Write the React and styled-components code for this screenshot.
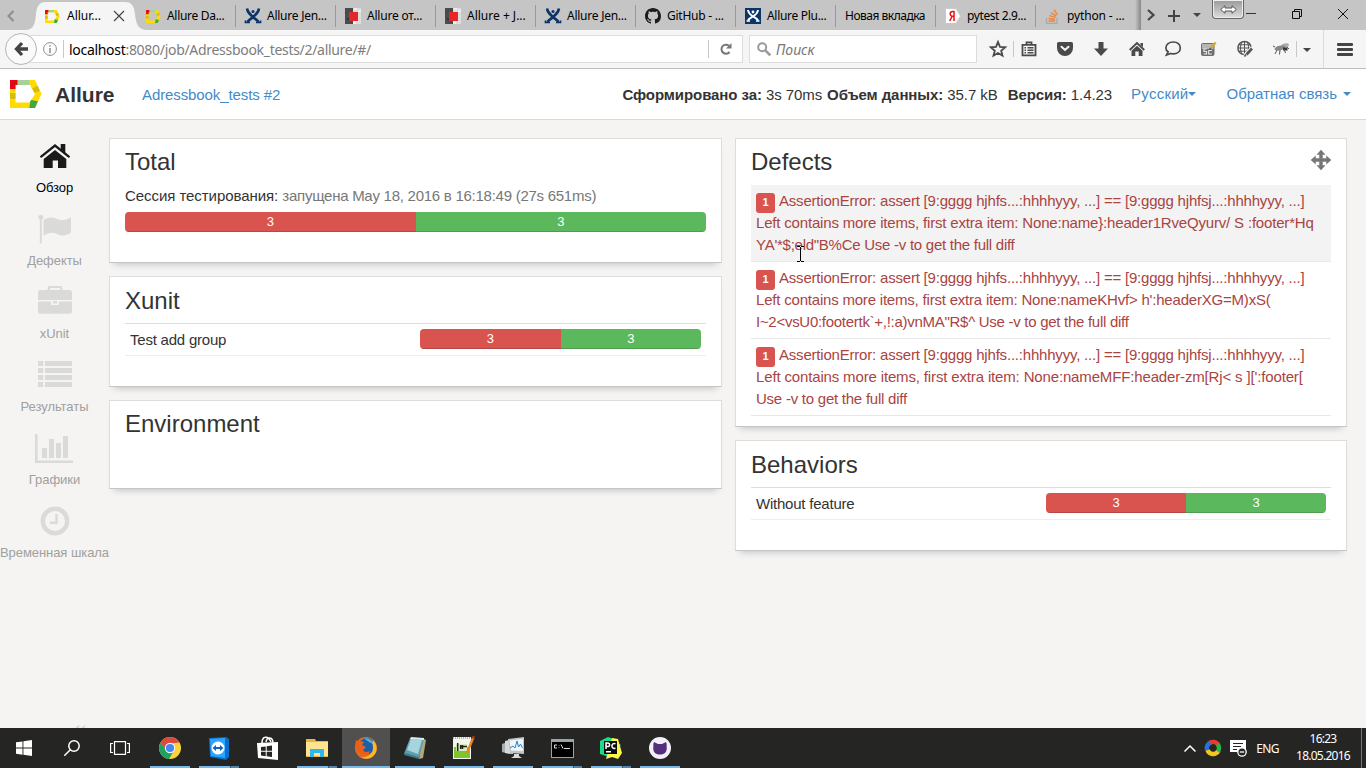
import React from "react";
import styled, { createGlobalStyle, css } from "styled-components";

const GlobalStyle = createGlobalStyle`
  * { box-sizing: border-box; }
  body {
    margin: 0;
    overflow: hidden;
    background: #f5f4f2;
    font-family: "Liberation Sans", Arial, sans-serif;
    font-size: 15px;
    color: #333;
  }
  svg { display: block; flex: none; overflow: visible; }
`;

const uiFont = css`font-family: "Noto Sans", "Open Sans", sans-serif;`;

const Screen = styled.div`
  width: 1366px;
  height: 768px;
  display: flex;
  flex-direction: column;
  overflow: hidden;
`;

/* ---------- browser chrome ---------- */

const TabStrip = styled.div`
  height: 30px;
  display: flex;
  background: #c5c5c5;
  ${uiFont}
`;

const StripCell = styled.div`
  width: ${(p) => p.$w}px;
  height: ${(p) => p.$h || 30}px;
  display: flex;
  align-items: center;
  justify-content: center;
  flex: none;
`;

const TabBox = styled.div`
  position: relative;
  width: 100px;
  height: 30px;
  padding: 2px 0 0 ${(p) => (p.$first ? 11 : 10)}px;
  display: flex;
  align-items: center;
  flex: none;
  color: #000;
  > svg { position: relative; z-index: 1; }
  &::after {
    content: "";
    display: ${(p) => (p.$active || p.$first ? "none" : "block")};
    position: absolute;
    left: 0;
    top: 5px;
    height: 22px;
    width: 1px;
    background: #999;
  }
`;

const TabShape = styled.div`
  position: absolute;
  left: -9px;
  top: 0;
`;

const TabTitle = styled.span`
  position: relative;
  z-index: 1;
  font-size: 12px;
  line-height: 18px;
  letter-spacing: ${(p) => p.$ls ?? -0.25}px;
  margin-left: ${(p) => (p.$noIcon ? 0 : p.$active ? 7 : 6)}px;
  white-space: nowrap;
  width: ${(p) => (p.$active ? "46px" : "auto")};
`;

const NavBar = styled.div`
  height: 39px;
  display: flex;
  align-items: center;
  background: #f5f5f5;
  border-bottom: 1px solid #bdbdbd;
  padding-left: 5px;
  ${uiFont}
`;

const BackButton = styled.div`
  position: relative;
  z-index: 1;
  width: 32px;
  height: 32px;
  border-radius: 50%;
  border: 1px solid #b5b5b5;
  background: #fafafa;
  display: flex;
  align-items: center;
  justify-content: center;
  flex: none;
`;

const Field = styled.div`
  height: 28px;
  width: ${(p) => p.$w}px;
  margin-left: ${(p) => p.$ml}px;
  padding-left: ${(p) => p.$pl}px;
  background: #fff;
  border: 1px solid #dcdcdc;
  display: flex;
  align-items: center;
  flex: none;
`;

const Rule = styled.div`
  width: 1px;
  height: ${(p) => p.$h || 18}px;
  margin-left: ${(p) => p.$ml || 0}px;
  background: ${(p) => p.$c || "#c8c8c8"};
  flex: none;
`;

const Url = styled.span`
  flex: 1;
  margin-left: 5px;
  padding-top: 1px;
  font-size: 14px;
  letter-spacing: -0.47px;
  color: #7d7d7d;
  letter-spacing: -0.3px;
  b { font-weight: 400; color: #000; }
`;

const Placeholder = styled.span`
  margin-left: 5px;
  padding-top: 1px;
  font-size: 14px;
  font-style: italic;
  color: #777;
`;

/* ---------- report ---------- */

const ReportHeader = styled.header`
  height: 51px;
  display: flex;
  align-items: center;
  background: #fff;
  border-bottom: 1px solid #d9d9d9;
  padding-left: 10px;
  white-space: nowrap;
`;

const Brand = styled.span`
  width: 87px;
  margin: 2px 0 0 13px;
  font-size: 21px;
  font-weight: 700;
  line-height: 24px;
`;

const Link = styled.a`
  color: #428bca;
  display: flex;
  align-items: center;
  margin-left: ${(p) => p.$ml || 0}px;
  margin-top: ${(p) => p.$mt || 0}px;
  letter-spacing: ${(p) => p.$ls || 0}px;
`;

const Caret = styled.i`
  margin-left: ${(p) => p.$ml || 0}px;
  margin-top: 2px;
  border: 4px solid transparent;
  border-top-color: ${(p) => p.$c || "#428bca"};
  border-bottom: 0;
`;

const Stats = styled.div`
  flex: 1;
  display: flex;
  justify-content: flex-end;
`;

const Stat = styled.span`
  margin-left: ${(p) => p.$ml || 0}px;
  letter-spacing: -0.08px;
`;

const Body = styled.main`
  height: 608px;
  display: flex;
  padding-right: 19px;
`;

const Side = styled.nav`
  width: 109px;
  padding-top: 21px;
  display: flex;
  flex-direction: column;
  align-items: center;
  flex: none;
`;

const SideItem = styled.div`
  height: 73px;
  flex: none;
  display: flex;
  flex-direction: column;
  align-items: center;
  font-size: 13px;
  line-height: 18px;
  letter-spacing: -0.06px;
  color: ${(p) => (p.$active ? "#000" : "#a0a0a0")};
  white-space: nowrap;
  svg { margin-bottom: 6px; color: ${(p) => (p.$active ? "#1a1a1a" : "#dadad8")}; }
`;

const Collapse = styled.div`
  flex: none;
  margin: 135px 0 0 50px;
  font-size: 26px;
  line-height: 30px;
  color: #d8d8d6;
`;

const Column = styled.div`
  width: ${(p) => p.$w}px;
  margin: 18px ${(p) => p.$mr || 0}px 0 0;
  display: flex;
  flex-direction: column;
  gap: 13px;
  flex: none;
`;

const Card = styled.section`
  height: ${(p) => p.$h}px;
  padding: 7px 15px 0;
  background: #fff;
  border: 1px solid #dddddb;
  border-bottom-color: #c4c5c7;
  box-shadow: 0 6px 7px -5px rgba(0, 0, 0, 0.22);
`;

const CardHead = styled.div`
  height: 39px;
  padding-top: ${(p) => (p.$low ? 1 : 0)}px;
  display: flex;
  justify-content: space-between;
`;

const Title = styled.h3`
  margin: 0;
  font-size: 24px;
  font-weight: 400;
  line-height: 32px;
`;

const Session = styled.p`
  margin: 0 0 5px;
  line-height: 22px;
  letter-spacing: -0.06px;
  white-space: nowrap;
  span { color: #777; letter-spacing: -0.26px; }
`;

const Bar = styled.div`
  width: ${(p) => p.$w};
  height: 20px;
  display: flex;
  border-radius: 4px;
  overflow: hidden;
`;

const Segment = styled.div`
  flex: 1;
  background: ${(p) => (p.$ok ? "#5cb85c" : "#d9534f")};
  box-shadow: inset 0 -1px 0 rgba(0, 0, 0, 0.15);
  color: #fff;
  font-size: 13px;
  line-height: 20px;
  text-align: center;
`;

const TableRow = styled.div`
  height: 33px;
  display: flex;
  align-items: center;
  justify-content: space-between;
  padding: 0 5px 1px;
  border-top: 1px solid #ddd;
  border-bottom: 1px solid #eee;
  span { letter-spacing: -0.22px; }
`;

const Defect = styled.div`
  height: 77px;
  padding: 5px;
  line-height: 22px;
  color: #a94442;
  white-space: pre;
  border-bottom: 1px solid #e8e8e8;
  background: ${(p) => (p.$hover ? "#f3f3f3" : "#fff")};
`;

const DefectLine = styled.div`
  height: 22px;
  display: flex;
  letter-spacing: ${(p) => p.$ls}px;
`;

const Badge = styled.span`
  width: 19px;
  height: 20px;
  margin: 3px 4px 0 0;
  border-radius: 3px;
  background: #d9534f;
  color: #fff;
  font-size: 11px;
  font-weight: 700;
  line-height: 18px;
  text-align: center;
`;

const Pointer = styled.div`
  position: absolute;
  left: 797px;
  top: 246px;
`;

/* ---------- taskbar ---------- */

const Taskbar = styled.footer`
  position: relative;
  height: 40px;
  display: flex;
  background: #252523;
  color: #fff;
  ${uiFont}
`;

const TaskButton = styled.div`
  position: relative;
  width: 48px;
  height: 40px;
  margin-right: ${(p) => (p.$app ? 1 : 0)}px;
  display: flex;
  align-items: center;
  justify-content: center;
  flex: none;
  background: ${(p) => (p.$active ? "#505050" : "transparent")};
  &::after {
    content: "";
    display: ${(p) => (p.$open ? "block" : "none")};
    position: absolute;
    bottom: 0;
    left: ${(p) => (p.$active ? 0 : 4)}px;
    right: ${(p) => (p.$active ? 0 : 4)}px;
    height: 2px;
    background: ${(p) => (p.$multi ? "linear-gradient(90deg,#76b9ed 31px,#3b5a70 31px,#3b5a70 32px,#5384ab 32px)" : "#76b9ed")};
  }
`;

const Tray = styled.div`
  flex: 1;
  display: flex;
  align-items: center;
  justify-content: flex-end;
  font-size: 12px;
`;

const Lang = styled.span`
  margin: 0 17px 0 10px;
  letter-spacing: -0.6px;
`;

const Clock = styled.div`
  width: 54px;
  margin-top: -2px;
  text-align: center;
  line-height: 17px;
  letter-spacing: -0.75px;
  white-space: nowrap;
`;

/* ---------- drawings ---------- */

const Svg = ({ w = 16, h = w, box, children, ...rest }) => (
  <svg width={w} height={h} viewBox={box || `0 0 ${w} ${h}`} fill="currentColor" {...rest}>{children}</svg>
);

const AllureLogo = ({ w = 32, h = 28 }) => (
  <Svg w={w} h={h} box="0 0 32 28">
    <path fill="#ffdb00" fillRule="evenodd" d="M0 0H25L31.500 14 25 28H0zM5.500 5V22.500H19.500L25 14 20 5z" />
    <path fill="#e30613" d="M0 0h7.700v5H5.500v4H0z" />
    <path fill="#a6d09c" d="M7.700 0h11.600v5H7.700z" />
    <path fill="#d9ba10" d="M22.200 8.500l5.400-2.800 2.300 5.300-5.500 2zM0 13h5.500v6H0z" />
    <path fill="#3fa845" d="M21.200 20l6.700 1.300L25 28h-5.700l1-5.500h-.8z" />
  </Svg>
);

const JiraMark = ({ c = "#0b3468" }) => (
  <Svg w={16} stroke={c} fill="none">
    <path strokeWidth="2.500" d="M2 .5C2.500 5 6 7 8 9s4 2.500 5.500 5M14 .5C13.500 5 10 7 8 9s-4 2.500-5.500 5" />
    <circle cx="8" cy="3.600" r="1.500" fill={c} stroke="none" />
    <path strokeWidth="1.700" d="M.5 12.500v2H5M15.500 12.500v2H11" />
  </Svg>
);

const RedBox = () => (
  <Svg w={16}>
    <path fill="#4b4b4d" d="M0 0h8v16H0z" />
    <path fill="#ddd" d="M8 0h8v16H8z" />
    <path fill="#eee" d="M9 0h3v2H9zM13 2h3v2h-3zM8 13h3v3H8z" />
    <path fill="#e3272b" d="M4 4h9v9H4z" />
    <path fill="#333" d="M0 4h1v1H0zM2 10h2v2H2z" />
  </Svg>
);

const OCTO = "M8 0C3.580 0 0 3.580 0 8c0 3.540 2.290 6.530 5.470 7.590.4.070.55-.17.55-.38 0-.19-.01-.82-.01-1.490-2.010.37-2.530-.49-2.690-.94-.09-.23-.48-.94-.82-1.130-.28-.15-.68-.52-.01-.53.63-.01 1.080.58 1.230.82.72 1.210 1.870.87 2.330.66.07-.52.28-.87.51-1.070-1.780-.2-3.640-.89-3.640-3.950 0-.87.31-1.590.82-2.150-.08-.2-.36-1.020.08-2.120 0 0 .67-.21 2.200.82.64-.18 1.320-.27 2-.27s1.360.09 2 .27c1.530-1.040 2.200-.82 2.200-.82.44 1.100.16 1.920.08 2.120.51.56.82 1.270.82 2.150 0 3.070-1.870 3.750-3.650 3.950.29.25.54.73.54 1.480 0 1.070-.01 1.930-.01 2.200 0 .21.15.46.55.38A8.010 8.010 0 0 0 16 8c0-4.420-3.580-8-8-8z";

const Octocat = () => <Svg w={16}><path fill="#1b1b1b" d={OCTO} /></Svg>;

const JiraTile = () => (
  <Svg w={16}>
    <path fill="#0b3468" d="M0 0h16v16H0z" />
    <g stroke="#fff" fill="none" strokeWidth="2">
      <path d="M3 2c.5 4 3 5 5 6.500s4 2 5 4M13 2c-.5 4-3 5-5 6.500s-4 2-5 4" />
    </g>
    <circle cx="8" cy="4" r="1.400" fill="#fff" />
    <path stroke="#fff" strokeWidth="1.400" d="M1.500 13H5M11 13h3.500" />
  </Svg>
);

const YandexMark = () => (
  <Svg w={16}>
    <path fill="#fff" stroke="#c9c9c9" d="M1.500.5H11l4.500 7.500-4.500 7.500H1.500Q.5 15.500.5 14.500v-13Q.5.500 1.500.500z" />
    <path fill="none" stroke="#e11" strokeWidth="1.500" d="M9 13V3.400H7.600c-3.200 0-3.200 4.900 0 4.900H9M7 8.500L4.700 13" />
  </Svg>
);

const StackMark = () => (
  <Svg w={16} fill="none">
    <path stroke="#aaa" strokeWidth="1.300" d="M1.500 10v5.300h10.500V10" />
    <path stroke="#ef8236" strokeWidth="1.400" d="M3.500 13h6.500M3.600 10.500l6.500.7M4.300 7.600l6.200 1.800M6 4.600l5.400 3.500M9 1.600l3.500 5.300" />
  </Svg>
);

const ActiveTabShape = () => (
  <Svg w={120} h={30}>
    <path fill="#f5f5f5" d="M0 30C8 29 9 24 10 14 11 5 14 2 20 2h79c6 0 9 3 10 12 1 10 3 15 11 16z" />
  </Svg>
);

const SideIcons = {
  home: (
    <>
      <path d="M19 9l11.300 9V27H22v-7.500h-5.300V27H7.700V18z" />
      <path fill="none" stroke="currentColor" strokeWidth="2.300" strokeLinecap="round" d="M5.200 15.600L19 4.500l13.800 11.100" />
      <path d="M24.700 3h4.600v10L24.700 9z" />
    </>
  ),
  flag: (
    <>
      <circle cx="5.800" cy="3.200" r="2.500" />
      <path d="M4.800 4h2v25.500h-2zM8.500 6C12 3.500 16 2.800 19.500 4 25 6.500 29 7.500 36 3.200V18.500C30 22.500 26 22 22 20 17 17.800 13 19 8.500 21.800z" />
    </>
  ),
  briefcase: (
    <>
      <path d="M2 5.500Q2 3 4.500 3H11.700V1Q11.700-1 13.500-1h11Q26.300-1 26.300 1v2h7.200Q36 3 36 5.500V13H2zM14 3h10V1H14z" fillRule="evenodd" />
      <path d="M2 14.500h13V18h8v-3.500h13v9.700q0 2.500-2.500 2.500h-29Q2 26.700 2 24.200z" />
      <path d="M17 14h4v2.500h-4z" />
    </>
  ),
  list: <path d="M2 1h5.300v5H2zM9 1h27v5H9zM2 8h5.300v5H2zM9 8h27v5H9zM2 15h5.300v5H2zM9 15h27v5H9zM2 22h5.300v5H2zM9 22h27v5H9z" />,
  chart: <path d="M0 1h2.600v26.500H38V30H0zM7 15h5v10H7zM14 6h5v19h-5zM21 10h5v15h-5zM28 3h5v22h-5z" />,
  clock: (
    <g fill="none" stroke="currentColor">
      <circle cx="19" cy="15" r="12.200" strokeWidth="4.400" />
      <path strokeWidth="2.500" d="M20.500 8v8.700H14" />
    </g>
  ),
};

const MoveIcon = () => (
  <Svg w={20} fill="#777" stroke="#777" strokeWidth=".5">
    <path d="M10 0l4 4.500h-2.500v4h4V6L20 10l-4.500 4v-2.500h-4v4H14L10 20l-4-4.500h2.500v-4h-4V14L0 10l4.500-4v2.500h4v-4H6z" />
  </Svg>
);

const toolIcons = [
  <Svg w={16} h={16} key="list" fill="none" stroke="#4a4a4a"><path strokeWidth="1.800" d="M1.500 3.900h13v10.500h-13zM5.500 3.500V1.300h5v2.200" /><path strokeWidth="1.500" d="M3.500 6.700H5M6.500 6.700h6M3.500 9.200H5M6.500 9.200h6M3.500 11.700H5M6.500 11.700h6" /></Svg>,
  <Svg w={16} key="pocket"><path fill="#4a4a4a" d="M1.500 1h13Q16 1 16 2.500V7a8 8 0 0 1-16 0V2.500Q0 1 1.500 1z" /><path fill="none" stroke="#f5f5f5" strokeWidth="2" strokeLinecap="round" d="M4.500 5.700L8 9l3.500-3.300" /></Svg>,
  <Svg w={16} key="down"><path fill="#4a4a4a" d="M5.500 1h5v6.500H15L8 15 1 7.500h4.500z" /></Svg>,
  <Svg w={16} key="home"><path fill="#4a4a4a" d="M8 4.800l5.500 5V15H9.700v-4.500H6.300V15H2.500V9.800z" /><path fill="none" stroke="#4a4a4a" strokeWidth="1.800" d="M.7 9L8 2l7.300 7" /><path fill="#4a4a4a" d="M11.500 2H14v4l-2.500-2z" /></Svg>,
  <Svg w={16} key="chat" fill="none" stroke="#4a4a4a"><path strokeWidth="1.700" d="M8.300 1c4.100 0 7 2.400 7 5.900s-2.900 6-7 6c-1 0-1.800-.1-2.500-.4L1.500 14l1.600-3.200C1.700 9.800.9 8.500.9 6.900.9 3.400 4.100 1 8.300 1z" /></Svg>,
  <Svg w={16} key="sc"><rect x="0" y="2" width="13.500" height="13" rx="2" fill="#6f6f6f" /><path fill="#b5b5b5" d="M1 3h11.500v5H1z" /><path fill="none" stroke="#e5e5e5" strokeWidth="1.200" d="M5.500 8H3v2.500h2.500V13H2.500M11 9.500H7.700V13H11" /><path stroke="#d4a92a" strokeWidth="2.200" d="M14.700 1.500L9.500 7.500" /><path stroke="#444" strokeWidth="1.500" d="M9.700 7.200L8.500 8.500" /></Svg>,
  <Svg w={16} key="globe" fill="none" stroke="#555"><circle cx="7.500" cy="7" r="6.600" strokeWidth="1.500" /><path d="M1 7h13M7.500.500v13M2 3.800h11M2 10.200h8M4.800 1C3 5 3 9 4.800 13M10.200 1c1.800 4 1.800 6 .5 9" /><path stroke="#f5f5f5" strokeWidth="4" d="M15.500 6.500L8 14.500" /><path stroke="#555" strokeWidth="2.600" d="M15 7.500L9.500 13.500" /><path strokeWidth="1.500" d="M9 13.500L7.500 15.500" /></Svg>,
  <Svg w={16} key="fly"><ellipse cx="12" cy="4.500" rx="4" ry="2" fill="#aaa" transform="rotate(-15 12 4.500)" /><ellipse cx="7" cy="7" rx="5.500" ry="2.300" fill="#888" transform="rotate(-12 7 7)" /><path fill="#333" d="M10 6.500h4.500v3H10z" /><path stroke="#555" d="M4 9l-2 4M7 9l-.5 4.500M11 8l1.500 4M2 6L0 5M14 6l2 2" /></Svg>,
];

const tabs = [
  { title: "Allur...", icon: <AllureLogo w={15} h={13} />, active: true, ls: 0 },
  { title: "Allure Da...", icon: <AllureLogo w={15} h={13} />, first: true, ls: -0.3 },
  { title: "Allure Jen...", icon: <JiraMark /> },
  { title: "Allure от...", icon: <RedBox />, ls: -0.2 },
  { title: "Allure + J...", icon: <RedBox />, ls: 0 },
  { title: "Allure Jen...", icon: <JiraMark /> },
  { title: "GitHub - ...", icon: <Octocat /> },
  { title: "Allure Plu...", icon: <JiraTile />, ls: -0.3 },
  { title: "Новая вкладка", ls: -0.5 },
  { title: "pytest 2.9...", icon: <YandexMark />, ls: -0.4 },
  { title: "python - ...", icon: <StackMark />, ls: -0.15 },
];

const sideItems = [
  ["Обзор", "home"],
  ["Дефекты", "flag"],
  ["xUnit", "briefcase"],
  ["Результаты", "list"],
  ["Графики", "chart"],
  ["Временная шкала", "clock"],
];

const defects = [
  [["Left contains more items, first extra item: None:name}:header1RveQyurv/ S :footer*Hq", -0.18], ["YA'*$;eld\"B%Ce Use -v to get the full diff", -0.26]],
  [["Left contains more items, first extra item: None:nameKHvf> h':headerXG=M)xS(", -0.2], ["I~2<vsU0:footertk`+,!:a)vnMA\"R$^ Use -v to get the full diff", -0.28]],
  [["Left contains more items, first extra item: None:nameMFF:header-zm[Rj< s ][':footer[", -0.15], ["Use -v to get the full diff", -0.24]],
];

const apps = [
  { open: true, icon: (
    <Svg w={22}>
      <circle cx="11" cy="11" r="11" fill="#fdd23c" />
      <path fill="#dc4a3e" d="M1.500 5.500a11 11 0 0 1 19 0L11 6.500 6.500 13z" />
      <path fill="#1da261" d="M1.500 5.500A11 11 0 0 0 10 22l5-8.500-8-.5z" />
      <circle cx="11" cy="11" r="5.200" fill="#f4f4f4" /><circle cx="11" cy="11" r="4.100" fill="#4587f0" />
    </Svg>) },
  { open: true, multi: true, icon: (
    <Svg w={20} h={23}>
      <path fill="#0a6ed1" d="M0 1l17-1 3 2v18l-3 3L1 20z" /><path fill="#29a7ff" d="M1 2l15-1v20L2 19z" />
      <circle cx="9" cy="11" r="6.500" fill="#fff" /><path fill="#1464c0" d="M3.500 11L7 8v2h4V8l3.500 3-3.500 3v-2H7v2z" />
    </Svg>) },
  { icon: (
    <Svg w={22} h={24}>
      <path fill="none" stroke="#fff" strokeWidth="1.500" d="M5 7c0-7 6-8 9-1M9 6c1-6 7-5 7 1" />
      <path fill="#fff" d="M0 7l21-1v18L1 22z" />
      <path fill="#252523" d="M4 11l4.700-.6v4.400H4zM9.700 10.200L15 9.500v5.300H9.700zM4 15.800h4.700v4.400L4 19.600zM9.700 15.800H15V21l-5.300-.7z" />
    </Svg>) },
  { open: true, multi: true, icon: (
    <Svg w={22} h={18}>
      <path fill="#e7b63c" d="M0 0h9l1 2h12v16H0z" /><path fill="#ffe38f" d="M0 3h22v14H0z" />
      <path fill="#2cb7ed" d="M4 10h14v8h-4v-4H8v4H4z" />
    </Svg>) },
  { open: true, active: true, icon: (
    <Svg w={22}>
      <circle cx="11" cy="11" r="11" fill="#e66a1c" /><circle cx="12" cy="9" r="8" fill="#1c5fa8" />
      <path fill="#4fb2dc" d="M9 1.500c5-1.500 9 2 9.500 6L14 5z" />
      <path fill="#f9b92b" d="M18 3c5 5 5 13-1 17-4 2.500-8 2-11 0 6 1 12-3 12-9 0-3-1-5 0-8z" />
      <path fill="#e9601a" d="M1 3l3 2c2-1 3-1 5 0L7 8l4 2-3 3c2 3 5 2 7 1-1 5-8 6-12 1-3-4-3-8-2-12z" />
    </Svg>) },
  { open: true, icon: (
    <Svg w={22} h={22}>
      <path fill="#b3a778" d="M18 1l4 2-3 18-4 1z" /><path fill="#5f9fae" d="M6 1l14 1-5 19L0 17z" />
      <path fill="#a7d4dd" d="M7 2l11 1-4 14-11-4z" /><path fill="#d4edf1" d="M7 0l13 1v2L6 2z" /><path fill="#3e7a8b" d="M1 16l14 4v2L0 18z" />
    </Svg>) },
  { open: true, icon: (
    <Svg w={22} h={24}>
      <path fill="#f5f5f0" d="M0 1h18v22H0z" /><path fill="#7dc62e" d="M1 11h16v11H1z" /><path stroke="#777" strokeDasharray="1 1" d="M0 2h18" />
      <path fill="#d7efb5" d="M3 8h11v7H3z" /><path fill="none" stroke="#222" strokeWidth="1.500" d="M4.700 7v8M7.700 9v4M9.500 9v4M8 10.500h6" /><path stroke="#e18a25" strokeWidth="2.500" d="M20.500 1L14 17" /><path stroke="#9b2e25" strokeWidth="2.500" d="M21 0l-1 2.500" />
    </Svg>) },
  { open: true, icon: (
    <Svg w={23} h={22}>
      <path fill="#a8acae" d="M0 7l8-3v13l-8-2z" /><path fill="#d7dadb" d="M3 4l8-2v15l-8-1z" />
      <path fill="#c1c6c9" d="M6 2l16-2v17L8 16z" /><path fill="#eff7fc" d="M7.500 3.500L21 2v12L9 13.500z" />
      <path fill="none" stroke="#2a83c4" d="M8 11l3-2 2 2 2-7 1.500 6 2-3 2 4" /><path fill="#d8dcdd" d="M12 17h5v2l3 2H9l3-2z" />
    </Svg>) },
  { open: true, multi: true, icon: (
    <Svg w={23} h={19}>
      <path fill="#98a3ab" d="M0 0h23v19H0z" /><path fill="#000" d="M1 3h21v15H1z" />
      <path fill="none" stroke="#ddd" d="M6 6H3.500v3H6M8 6.500v.5M8 8.500v.5M10 5.500l2 4M13 9.500h6" />
    </Svg>) },
  { open: true, multi: true, icon: (
    <Svg w={22}>
      <path fill="#21d789" d="M0 4L8 0l6 2-5 18-9-3z" /><path fill="#07c3f2" d="M14 4l7 4-3 4z" /><path fill="#fcf84a" d="M12 1l6 1 4 14-4 6-6-2-6 2z" />
      <path fill="#0c0c0c" d="M4 4h13v13H4z" /><path fill="none" stroke="#fff" strokeWidth="1.500" d="M6 12V6h1.600q2 0 2 1.800T7.600 9.500H6M15.500 6.800c-4-2-5.500 5.400 0 4.500M6 14.700h5" />
    </Svg>) },
  { open: true, icon: (
    <Svg w={22}>
      <circle cx="11" cy="11" r="11" fill="#f2eff8" />
      <path fill="#54307c" d="M5 5l4 2h4l4-2q1 2 .6 4c1 6-2 8.500-6.600 8.500S3.400 15 4.400 9Q4 7 5 5z" />
    </Svg>) },
];

/* ---------- compound parts ---------- */

const ResultBar = ({ width }) => (
  <Bar $w={width}>
    <Segment>3</Segment>
    <Segment $ok>3</Segment>
  </Bar>
);

const Widget = ({ title, height, low, action, children }) => (
  <Card $h={height}>
    <CardHead $low={low}><Title>{title}</Title>{action}</CardHead>
    {children}
  </Card>
);

const MoveHandle = styled.span`padding-top: 4px;`;

const ScrollLock = styled.div`
  width: 32px;
  height: 19px;
  border: 1px solid #666;
  border-top: 0;
  border-radius: 0 0 4px 4px;
  background: linear-gradient(#999, #ddd);
  box-shadow: inset 0 0 0 1px #eee;
  display: flex;
  align-items: center;
  justify-content: center;
  flex: none;
`;

const TabEdge = styled.div`
  width: 6px;
  height: 30px;
  margin-right: 1px;
  background: linear-gradient(90deg, #c5c5c5, #888);
`;

export default function App() {
  return (
    <Screen>
      <GlobalStyle />
      <TabStrip>
        <StripCell $w={35} $h={31}>
          <Svg w={35} h={12} fill="none" stroke="#8c8c8c" strokeWidth="2"><path d="M13.500 1L8.500 6l5 5" /></Svg>
        </StripCell>
        {tabs.map((t, i) => (
          <TabBox key={i} $active={t.active} $first={t.first}>
            {t.active && <TabShape><ActiveTabShape /></TabShape>}
            {t.icon}
            <TabTitle $active={t.active} $noIcon={!t.icon} $ls={t.ls}>{t.title}</TabTitle>
            {t.active && <Svg w={10} stroke="#444" strokeWidth="1.200"><path d="M1 0l10 10M11 0L1 10" /></Svg>}
          </TabBox>
        ))}
        <TabEdge />
        <StripCell $w={18}><Svg w={8} h={12} fill="none" stroke="#444" strokeWidth="2.200"><path d="M1 1l5.500 5L1 11" /></Svg></StripCell>
        <StripCell $w={27} $h={32}><Svg w={12} stroke="#444" strokeWidth="2"><path d="M6 0v12M0 6h12" /></Svg></StripCell>
        <StripCell $w={19} $h={28}><Caret $c="#444" /></StripCell>
        <StripCell $w={6} />
        <ScrollLock><Svg w={17} h={9}><path fill="#fff" stroke="#555" d="M.7 4.500L5 .7v2.300h7V.7l4.300 3.800L12 8.300V6H5v2.300z" /></Svg></ScrollLock>
        <StripCell $w={14} $h={27}><Svg w={10} h={1}><path d="M0 0h10v1H0z" /></Svg></StripCell>
        <StripCell $w={78} $h={28}><Svg w={10} fill="none" stroke="#111"><path d="M.5 2.500h7v7h-7zM2.500 2.500v-2h7v7h-2" /></Svg></StripCell>
        <StripCell $w={14} $h={28}><Svg w={10} stroke="#111"><path d="M0 0l10 10M10 0L0 10" /></Svg></StripCell>
      </TabStrip>

      <NavBar>
        <BackButton>
          <Svg w={14} h={14} fill="none" stroke="#444" strokeWidth="3.300"><path d="M8 1L2.500 7 8 13M2.500 7H14" /></Svg>
        </BackButton>
        <Field $w={722} $ml={-16} $pl={21}>
          <Svg w={14} fill="none" stroke="#8c8c8c"><circle cx="7" cy="7" r="6.400" /><path strokeWidth="1.500" d="M7 6v5M7 3.300v1.500" /></Svg>
          <Rule $ml={6} />
          <Url><b>localhost</b>:8080/job/Adressbook_tests/2/allure/#/</Url>
          <Rule />
          <StripCell $w={33} $h={26}>
            <Svg w={12} fill="none" stroke="#777" strokeWidth="2"><path d="M9.500 9A4.500 4.500 0 1 1 9 2.800" /><path fill="#777" stroke="none" d="M11.500 0v5.500H6z" /></Svg>
          </StripCell>
        </Field>
        <Field $w={228} $ml={6} $pl={7}>
          <Svg w={14} fill="none" stroke="#999" strokeWidth="2"><circle cx="5.200" cy="5.200" r="4" /><path strokeWidth="2.600" d="M8.300 8.300l5 5" /></Svg>
          <Placeholder>Поиск</Placeholder>
        </Field>
        <StripCell $w={6} />
        <StripCell $w={30}>
          <Svg w={16} fill="none" stroke="#4a4a4a" strokeWidth="1.800"><path d="M8 1l2 4.900 5.200.4-4 3.400 1.300 5L8 12l-4.500 2.700 1.300-5-4-3.400 5.200-.4z" /></Svg>
        </StripCell>
        <Rule $h={16} />
        {toolIcons.map((icon, i) => (
          <React.Fragment key={i}>
            <StripCell $w={i === 0 ? 30 : 36}>{icon}</StripCell>
            {i === 0 && <StripCell $w={3} />}
          </React.Fragment>
        ))}
        <Rule $h={16} $ml={-3} />
        <StripCell $w={20}><Caret $c="#444" /></StripCell>
        <Rule $h={38} $ml={6} $c="#dcdcdc" />
        <StripCell $w={42}><Svg w={16} h={13} fill="#444"><rect width="16" height="3" rx="1" /><rect y="5" width="16" height="3" rx="1" /><rect y="10" width="16" height="3" rx="1" /></Svg></StripCell>
      </NavBar>

      <ReportHeader>
        <AllureLogo />
        <Brand>Allure</Brand>
        <Link $ls={-0.1}>Adressbook_tests #2</Link>
        <Stats>
          <Stat><b>Сформировано за:</b> 3s 70ms</Stat>
          <Stat $ml={5}><b>Объем данных:</b> 35.7 kB</Stat>
          <Stat $ml={10}><b>Версия:</b> 1.4.23</Stat>
        </Stats>
        <Link $ml={19} $mt={-2} $ls={0.25}>Русский<Caret /></Link>
        <Link $ml={30} $mt={-2}>Обратная связь<Caret $ml={6} /></Link>
        <StripCell $w={15} />
      </ReportHeader>

      <Body>
        <Side>
          {sideItems.map(([label, icon], i) => (
            <SideItem key={label} $active={i === 0}>
              <Svg w={38} h={32}>{SideIcons[icon]}</Svg>
              {label}
            </SideItem>
          ))}
          <Collapse>«</Collapse>
        </Side>
        <Column $w={613} $mr={13}>
          <Widget title="Total" height={125}>
            <Session>Сессия тестирования: <span>запущена May 18, 2016 в 16:18:49 (27s 651ms)</span></Session>
            <ResultBar width="100%" />
          </Widget>
          <Widget title="Xunit" height={111} low>
            <TableRow><span>Test add group</span><ResultBar width="281px" /></TableRow>
          </Widget>
          <Widget title="Environment" height={89} />
        </Column>
        <Column $w={612}>
          <Widget title="Defects" height={289} action={<MoveHandle><MoveIcon /></MoveHandle>}>
            {defects.map((lines, i) => (
              <Defect key={i} $hover={i === 0}>
                <DefectLine $ls={-0.2}><Badge>1</Badge>AssertionError: assert [9:gggg hjhfs...:hhhhyyy, ...] == [9:gggg hjhfsj...:hhhhyyy, ...]</DefectLine>
                {lines.map(([text, spacing]) => <DefectLine key={text} $ls={spacing}>{text}</DefectLine>)}
              </Defect>
            ))}
          </Widget>
          <Widget title="Behaviors" height={111} low>
            <TableRow><span>Without feature</span><ResultBar width="280px" /></TableRow>
          </Widget>
        </Column>
      </Body>

      <Taskbar>
        <TaskButton><Svg w={16}><path d="M0 2.300L6.500 1.400v6.200H0zM7.400 1.200L16 0v7.600H7.400zM0 8.500h6.500v6.200L0 13.800zM7.400 8.500H16V16l-8.600-1.200z" /></Svg></TaskButton>
        <TaskButton><Svg w={16} fill="none" stroke="#fff" strokeWidth="1.500"><circle cx="10" cy="6" r="5.200" /><path d="M6.300 9.700L.3 15.700" /></Svg></TaskButton>
        <TaskButton><Svg w={20} h={14} fill="none" stroke="#fff" strokeWidth="1.200"><path d="M4.500.6h11v12.800h-11zM3 2.500H.6v9H3M17 2.500h2.400v9H17" /></Svg></TaskButton>
        <StripCell $w={2} />
        {apps.map((a, i) => <TaskButton key={i} $app $open={a.open} $multi={a.multi} $active={a.active}>{a.icon}</TaskButton>)}
        <Tray>
          <Svg w={12} h={7} fill="none" stroke="#fff" strokeWidth="1.500"><path d="M.5 6.500L6 1l5.500 5.500" /></Svg>
          <StripCell $w={34}>
            <Svg w={16} fill="none" strokeWidth="4.500"><path stroke="#2472dd" d="M2 10A6 6 0 0 1 6 2.500" /><path stroke="#e33b2e" d="M5 2.800A6 6 0 0 1 13 4.500" /><path stroke="#2ab34a" d="M12.500 4A6 6 0 0 1 12 12.500" /><path stroke="#f6c51c" d="M13 11.500A6 6 0 0 1 2.500 10" /></Svg>
          </StripCell>
          <Svg w={16}><path fill="#fff" d="M0 0h16v12h-4l-3 3v-3H0z" /><path stroke="#252523" strokeWidth="1.200" d="M3 3.500h10M3 6.500h8M3 9.500h4" /><circle cx="12" cy="12" r="4.200" fill="#252523" stroke="#fff" strokeWidth="1.300" /><path stroke="#fff" strokeWidth="1.300" d="M9.800 12h4.400" /></Svg>
          <Lang>ENG</Lang>
          <Clock>16:23<br />18.05.2016</Clock>
          <Rule $h={40} $ml={11} $c="#777" />
          <StripCell $w={4} />
        </Tray>
      </Taskbar>
      <Pointer><Svg w={7} h={16} fill="none" stroke="#000"><path d="M0 .5h3M4 .5h3M3.500 1v14M0 15.500h3M4 15.500h3" /></Svg></Pointer>
    </Screen>
  );
}
